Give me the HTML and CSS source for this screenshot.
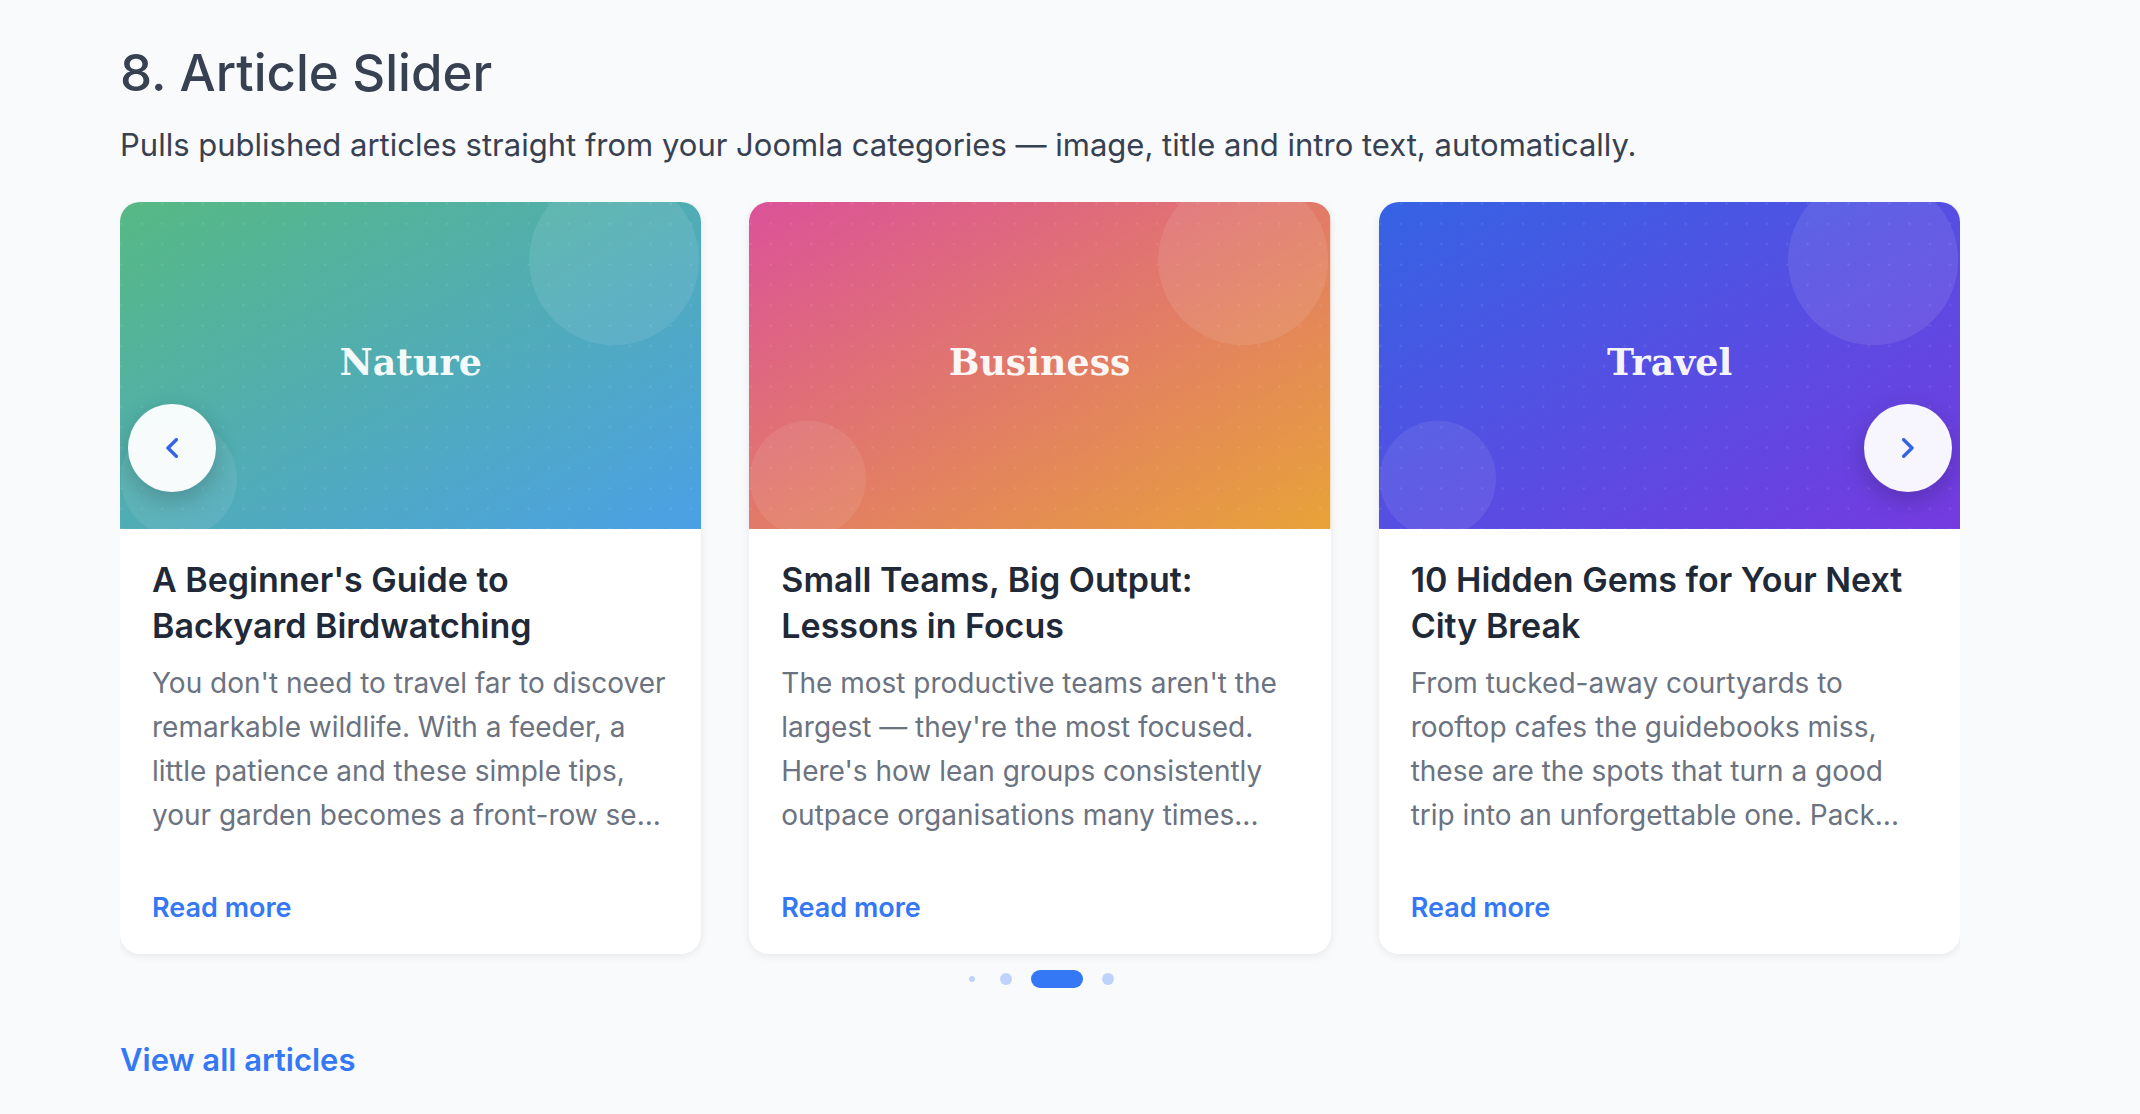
FILE: index.html
```
<!DOCTYPE html>
<html lang="en">
<head>
  <meta charset="UTF-8">
  <meta name="viewport" content="width=device-width, initial-scale=1">
  <title>Article Slider</title>
  <link rel="stylesheet" href="styles.css">
</head>
<body>
  <!-- shared by all the card covers -->
  <svg class="defs" width="0" height="0" aria-hidden="true">
    <defs>
      <linearGradient id="nature" x1="0" y1="0" x2="1" y2="1">
        <stop offset="0" stop-color="#56b983"/>
        <stop offset="1" stop-color="#4ba0e6"/>
      </linearGradient>
      <linearGradient id="business" x1="0" y1="0" x2="1" y2="1">
        <stop offset="0" stop-color="#db5299"/>
        <stop offset="1" stop-color="#e8a338"/>
      </linearGradient>
      <linearGradient id="travel" x1="0" y1="0" x2="1" y2="1">
        <stop offset="0" stop-color="#3563e4"/>
        <stop offset="1" stop-color="#753ae0"/>
      </linearGradient>
      <pattern id="dots" width="28" height="28" patternUnits="userSpaceOnUse">
        <circle cx="2" cy="2" r="1.5" fill="#fff" fill-opacity="0.12"/>
      </pattern>
    </defs>
  </svg>

  <section class="demo">
    <h2 class="demo-title">8. Article Slider</h2>
    <p class="demo-text">Pulls published articles straight from your Joomla categories — image, title and intro text, automatically.</p>

    <div class="slider">
      <div class="slides">
        <article class="card">
          <svg class="cover" viewBox="0 0 800 450" role="img" aria-label="Nature">
            <rect width="800" height="450" fill="url(#nature)"/>
            <rect width="800" height="450" fill="url(#dots)"/>
            <circle cx="680" cy="80" r="117" fill="#fff" fill-opacity="0.09"/>
            <circle cx="81" cy="381" r="80" fill="#fff" fill-opacity="0.08"/>
            <text class="cover-label" x="400" y="238">Nature</text>
          </svg>
          <div class="card-body">
            <h3 class="card-title">A Beginner's Guide to Backyard Birdwatching</h3>
            <p class="card-text">You don't need to travel far to discover remarkable wildlife. With a feeder, a little patience and these simple tips, your garden becomes a front-row se...</p>
            <a class="card-link" href="#">Read more</a>
          </div>
        </article>

        <article class="card">
          <svg class="cover" viewBox="0 0 800 450" role="img" aria-label="Business">
            <rect width="800" height="450" fill="url(#business)"/>
            <rect width="800" height="450" fill="url(#dots)"/>
            <circle cx="680" cy="80" r="117" fill="#fff" fill-opacity="0.09"/>
            <circle cx="81" cy="381" r="80" fill="#fff" fill-opacity="0.08"/>
            <text class="cover-label" x="400" y="238">Business</text>
          </svg>
          <div class="card-body">
            <h3 class="card-title">Small Teams, Big Output: Lessons in Focus</h3>
            <p class="card-text">The most productive teams aren't the largest — they're the most focused. Here's how lean groups consistently outpace organisations many times...</p>
            <a class="card-link" href="#">Read more</a>
          </div>
        </article>

        <article class="card">
          <svg class="cover" viewBox="0 0 800 450" role="img" aria-label="Travel">
            <rect width="800" height="450" fill="url(#travel)"/>
            <rect width="800" height="450" fill="url(#dots)"/>
            <circle cx="680" cy="80" r="117" fill="#fff" fill-opacity="0.09"/>
            <circle cx="81" cy="381" r="80" fill="#fff" fill-opacity="0.08"/>
            <text class="cover-label" x="400" y="238">Travel</text>
          </svg>
          <div class="card-body">
            <h3 class="card-title">10 Hidden Gems for Your Next City Break</h3>
            <p class="card-text">From tucked-away courtyards to rooftop cafes the guidebooks miss, these are the spots that turn a good trip into an unforgettable one. Pack...</p>
            <a class="card-link" href="#">Read more</a>
          </div>
        </article>
      </div>

      <button class="nav nav-prev" type="button" aria-label="Previous slide">
        <svg width="12" height="20" viewBox="0 0 12 20"><path d="M10.3 1.7L2 10L10.3 18.3"/></svg>
      </button>
      <button class="nav nav-next" type="button" aria-label="Next slide">
        <svg width="12" height="20" viewBox="0 0 12 20"><path d="M1.7 1.7L10 10L1.7 18.3"/></svg>
      </button>

      <div class="bullets">
        <button class="bullet bullet-small" type="button" aria-label="Go to slide 1"></button>
        <button class="bullet" type="button" aria-label="Go to slide 2"></button>
        <button class="bullet bullet-active" type="button" aria-label="Go to slide 3"></button>
        <button class="bullet" type="button" aria-label="Go to slide 4"></button>
      </div>
    </div>

    <a class="view-all" href="#">View all articles</a>
  </section>
</body>
</html>
```
FILE: styles.css
```
* { box-sizing: border-box; }
body { margin: 0; background: #f9fafc; color: #374151; font-family: Inter, "Liberation Sans", sans-serif; }
h2, h3, p { margin: 0; }
a { color: #3478f6; font-weight: 600; text-decoration: none; }
a:hover { text-decoration: underline; }
.defs { position: absolute; }

.demo { padding: 41px 180px 0 120px; }
.demo-title { font-size: 51px; line-height: 64px; font-weight: 500; }
.demo-text { margin-top: 16px; font-size: 31px; line-height: 48px; }

/* slider */
.slider { position: relative; margin-top: 33px; overflow: hidden; }
.slides { display: grid; grid-template-columns: repeat(3, 1fr); gap: 48px; }
.card { display: flex; flex-direction: column; border-radius: 20px; background: #fff; box-shadow: 0 2px 8px rgba(0, 0, 0, 0.08); overflow: hidden; }
.cover { display: block; width: 100%; }
.cover-label { fill: #fff; fill-opacity: 0.95; font-family: "DejaVu Serif", Georgia, serif; font-size: 50px; font-weight: 700; text-anchor: middle; }
.card-body { display: flex; flex: 1; flex-direction: column; align-items: flex-start; padding: 28px 32px; }
.card-title { color: #1f2937; font-size: 34px; line-height: 46px; font-weight: 600; }
.card-text { margin: 12px 0 52px; color: #6b7280; font-size: 28px; line-height: 44px; }
.card-link { margin-top: auto; font-size: 27px; line-height: 37px; }

/* arrows sit on top of the cards */
.nav { position: absolute; top: 202px; display: flex; align-items: center; justify-content: center; width: 88px; height: 88px; padding: 0; border: 0; border-radius: 50%; background: rgba(255, 255, 255, 0.95); box-shadow: 0 8px 24px rgba(0, 0, 0, 0.2); cursor: pointer; }
.nav svg { fill: none; stroke: #3563e4; stroke-width: 3.4; stroke-linecap: round; stroke-linejoin: round; }
.nav-prev { left: 8px; }
.nav-next { right: 8px; }

.bullets { display: flex; justify-content: center; gap: 16px; padding: 16px 0; }
.bullet { display: flex; align-items: center; justify-content: center; width: 18px; height: 18px; padding: 0; border: 0; background: none; cursor: pointer; }
.bullet::before { content: ""; width: 12px; height: 12px; border-radius: 50%; background: #bdd3fb; }
.bullet-small::before { width: 6px; height: 6px; }
.bullet-active { width: 52px; }
.bullet-active::before { width: 52px; height: 18px; border-radius: 9px; background: #3478f6; }

.view-all { display: inline-block; margin-top: 32px; font-size: 31px; line-height: 48px; }
```
